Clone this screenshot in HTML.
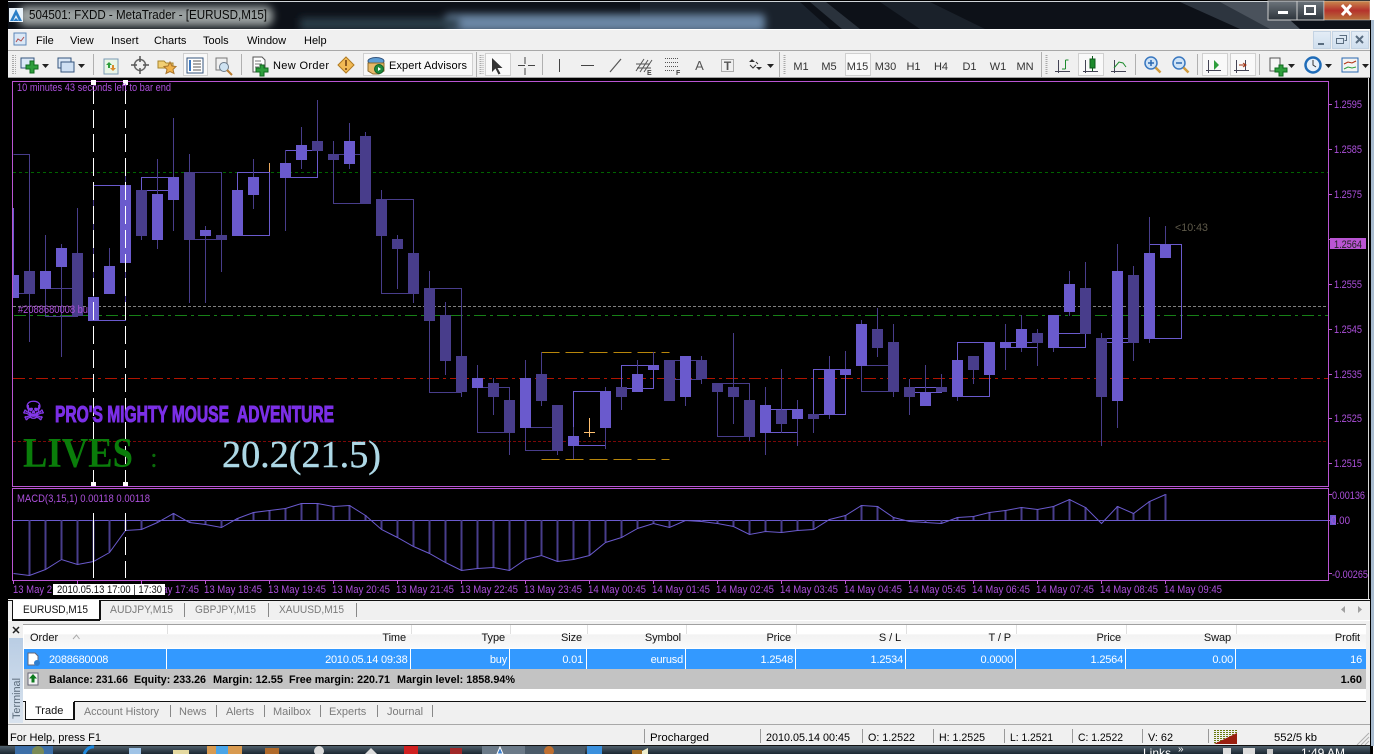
<!DOCTYPE html>
<html><head><meta charset="utf-8"><title>MetaTrader</title>
<style>
html,body{margin:0;padding:0;background:#fff;width:1378px;height:754px;overflow:hidden}
svg{display:block;position:absolute;left:0;top:0}
text{font-family:"Liberation Sans",sans-serif;font-size:11px;white-space:pre}
.c{fill:#ad50dc}
.t{fill:#ad50dc;font-size:11px}
.h{fill:#111;letter-spacing:-.1px;text-anchor:end}
.v{fill:#fff;letter-spacing:-.2px;text-anchor:end}
.g{fill:#7a7a7a}
.k{fill:#000}
.b{fill:#000;font-weight:bold}
.m{fill:#333;font-size:11px;text-anchor:middle}
</style></head><body>
<svg width="1378" height="754" viewBox="0 0 1378 754" xmlns="http://www.w3.org/2000/svg">
<defs>
<filter id="bl" x="-20%" y="-60%" width="140%" height="220%"><feGaussianBlur stdDeviation="4"/></filter>
<linearGradient id="cl" x1="0" y1="0" x2="0" y2="1"><stop offset="0" stop-color="#c98a4e"/><stop offset=".5" stop-color="#b5322c"/><stop offset="1" stop-color="#b8733c"/></linearGradient>
<linearGradient id="tb" x1="0" y1="0" x2="0" y2="1"><stop offset="0" stop-color="#50606c"/><stop offset="1" stop-color="#1b2731"/></linearGradient>
<linearGradient id="hd" x1="0" y1="0" x2="0" y2="1"><stop offset="0" stop-color="#fff"/><stop offset=".4" stop-color="#fff"/><stop offset=".41" stop-color="#f2f2f2"/><stop offset="1" stop-color="#fafafa"/></linearGradient>
<linearGradient id="tm" x1="0" y1="0" x2="0" y2="1"><stop offset="0" stop-color="#b9cde4"/><stop offset="1" stop-color="#d9e3ee"/></linearGradient>
<linearGradient id="mb" x1="0" y1="0" x2="0" y2="1"><stop offset="0" stop-color="#e4edf6"/><stop offset="1" stop-color="#cfdeee"/></linearGradient>
<linearGradient id="mn" x1="0" y1="0" x2="0" y2="1"><stop offset="0" stop-color="#6d757c"/><stop offset="1" stop-color="#2c333a"/></linearGradient>
</defs>

<!-- base -->
<rect x="0" y="0" width="1373" height="754" fill="#000"/>
<rect x="1371" y="20" width="3" height="726" fill="#a9bccf"/>
<rect x="1368" y="78" width="1" height="668" fill="#d8d8d8"/>

<!-- title wallpaper -->
<rect x="8" y="2" width="1362" height="27" fill="#0d1118"/>
<polygon points="640,2 800,2 830,29 640,29" fill="#1a222c"/>
<polygon points="810,2 826,2 860,29 842,29" fill="#2a323c"/>
<polygon points="880,2 930,2 985,29 920,29" fill="#1a212a"/>
<polygon points="1180,2 1270,2 1290,29 1240,29" fill="#2d353f"/>
<polygon points="1220,2 1270,2 1300,29 1270,29" fill="#4a525c"/>
<g filter="url(#bl)">
<rect x="18" y="6" width="255" height="20" rx="8" fill="#9aa0a0"/>
<rect x="445" y="14" width="320" height="18" rx="4" fill="#6a86a4"/>
<rect x="300" y="18" width="160" height="12" fill="#2c3c48"/>
</g>
<rect x="0" y="0" width="8" height="29" fill="#000"/>
<rect x="8" y="1" width="1362" height="1" fill="#cfd4d8"/>
<rect x="0" y="0" width="1373" height="1" fill="#000"/>
<rect x="9" y="8" width="14" height="14" fill="#e9f3fb"/>
<path d="M16 9L10 21H13L16 15L19 21H22Z M13 21L16 18L19 21" fill="#2b7fc8" />
<text x="29" y="19" style="font-size:13px;fill:#0a0a0a" textLength="238" lengthAdjust="spacingAndGlyphs">504501: FXDD - MetaTrader - [EURUSD,M15]</text>

<!-- title buttons -->
<g shape-rendering="crispEdges">
<rect x="1268" y="1" width="29" height="19" fill="url(#mn)" stroke="#ccc"/>
<rect x="1297" y="1" width="27" height="19" fill="url(#mn)" stroke="#ccc"/>
<rect x="1324" y="1" width="46" height="19" fill="url(#cl)" stroke="#ddd" stroke-opacity=".5"/>
<rect x="1278" y="11" width="10" height="3" fill="#fff"/>
<rect x="1305" y="6" width="10" height="8" fill="none" stroke="#fff" stroke-width="2"/>
</g>
<path d="M1342 5L1351 15M1351 5L1342 15" stroke="#fff" stroke-width="3"/>

<!-- menu + toolbar -->
<g shape-rendering="crispEdges">
<rect x="8" y="29" width="1362" height="49" fill="#f0f0f0"/>
<rect x="8" y="29" width="1362" height="1" fill="#fff"/>
<rect x="8" y="50" width="1362" height="1" fill="#a8a8a8"/>
<rect x="8" y="77" width="1362" height="1" fill="#a0a0a0"/>
</g>
<rect x="14" y="33" width="12" height="12" fill="#dbe8f6" stroke="#5b86b8"/>
<path d="M16 42l2-3 3 2 3-4" stroke="#b04a4a" fill="none"/>
<text x="36" y="44" class="k">File</text>
<text x="70" y="44" class="k">View</text>
<text x="111" y="44" class="k">Insert</text>
<text x="154" y="44" class="k">Charts</text>
<text x="203" y="44" class="k">Tools</text>
<text x="247" y="44" class="k">Window</text>
<text x="304" y="44" class="k">Help</text>

<!-- MDI buttons -->
<g shape-rendering="crispEdges">
<rect x="1313.5" y="31.5" width="17" height="17" fill="url(#mb)" stroke="#c4d3e3"/>
<rect x="1332.5" y="31.5" width="17" height="17" fill="url(#mb)" stroke="#c4d3e3"/>
<rect x="1351.5" y="31.5" width="17" height="17" fill="url(#mb)" stroke="#c4d3e3"/>
<rect x="1318" y="43" width="6" height="2" fill="#5a6d80"/>
<path d="M1339.5 35.5h7v5h-2M1336.5 38.5h7v5h-7z" fill="none" stroke="#5a6d80"/>
</g>
<path d="M1356 36l7 7M1363 36l-7 7" stroke="#5a6d80" stroke-width="2"/>

<!-- toolbar grips and separators -->
<g shape-rendering="crispEdges" fill="#b0b0b0">
<rect x="93" y="54" width="1" height="21"/><rect x="241" y="54" width="1" height="21"/>
<rect x="542" y="54" width="1" height="21"/><rect x="779" y="52" width="1" height="25"/>
<rect x="1041" y="52" width="1" height="25"/><rect x="1135" y="54" width="1" height="21"/>
<rect x="1197" y="54" width="1" height="21"/><rect x="1259" y="54" width="1" height="21"/>
<rect x="476" y="52" width="1" height="25"/>
</g>
<g stroke="#aaa" stroke-dasharray="1 1" shape-rendering="crispEdges">
<path d="M12.5 55V74M13.5 55V74M15.5 55V74"/>
<path d="M480 55V74M481 55V74M483 55V74"/>
<path d="M784 55V74M785 55V74"/>
<path d="M1046 55V74M1047 55V74"/>
</g>
<!-- active buttons -->
<g shape-rendering="crispEdges" fill="#f9f9f9" stroke="#d0d0d0">
<rect x="183.5" y="53.5" width="24" height="22"/>
<rect x="363.5" y="53.5" width="109" height="22"/>
<rect x="485.5" y="53.5" width="25" height="22"/>
<rect x="845.5" y="53.5" width="25" height="22"/>
<rect x="1078.5" y="53.5" width="25" height="22"/>
<rect x="1202.5" y="53.5" width="25" height="22"/>
<rect x="1230.5" y="53.5" width="25" height="22"/>
</g>

<!-- toolbar icons -->
<g fill="none">
<rect x="21" y="58" width="13" height="10" fill="#dbe8f6" stroke="#35557d"/>
<path d="M30 61h4v4h4v4h-4v4h-4v-4h-4v-4h4z" fill="#2e9e3c" stroke="#0f6a1e"/>
<path d="M42 64h7l-3.500 4z" fill="#222"/>
<rect x="58" y="58" width="13" height="10" fill="#dbe8f6" stroke="#35557d"/>
<rect x="61" y="62" width="13" height="10" fill="#cfe0f3" stroke="#35557d"/>
<path d="M78 64h7l-3.500 4z" fill="#222"/>
<rect x="104" y="59" width="14" height="15" fill="#e9f5e6" stroke="#7a9ab5"/>
<path d="M109 62l-3 3h2v3h2v-3h2z" fill="#2e9e3c"/>
<path d="M113 71l3-3h-2v-3h-2v3h-2z" fill="#d98a2a"/>
<circle cx="140" cy="65" r="5.500" stroke="#666" stroke-width="1.500"/>
<path d="M140 56v6M140 68v6M131 65h6M143 65h6" stroke="#555" stroke-width="1.500"/>
<path d="M158 61h6l2 2h7v5h-15z" fill="#f2cf74" stroke="#a8842c"/>
<path d="M170 62l2 4 4 .5-3 3 1 4-4-2-4 2 1-4-3-3 4-.500z" fill="#f0b24a" stroke="#a8742c"/>
<rect x="187" y="58" width="16" height="15" fill="#fff" stroke="#35557d"/>
<path d="M190 60v11" stroke="#3a78c0" stroke-width="2"/>
<path d="M193 61h8M193 64h8M193 67h8M193 70h8" stroke="#555"/>
<rect x="216" y="58" width="11" height="12" fill="#f0f0f0" stroke="#777"/>
<circle cx="224" cy="67" r="4.500" fill="#cfe3f2" stroke="#6a7a8a"/>
<path d="M227 70l5 5" stroke="#b87c30" stroke-width="2"/>
<path d="M253 57h9l3 3v12h-12z" fill="#fff" stroke="#555"/>
<path d="M255 61h6M255 64h7M255 67h4" stroke="#777"/>
<path d="M260 65h4v3h4v4h-4v4h-4v-4h-4v-4h4z" fill="#2e9e3c" stroke="#0f6a1e"/>
<path d="M346 57l8 8-8 8-8-8z" fill="#f2ba55" stroke="#b07a20"/>
<path d="M346 60v6M346 68v2" stroke="#6a3a10" stroke-width="1.500"/>
<ellipse cx="376" cy="61" rx="8" ry="3.500" fill="#5d9dd5" stroke="#35557d"/>
<path d="M368 63h16v8l-5 3h-6l-5-3z" fill="#e8b868" stroke="#8a6a2a"/>
<circle cx="379" cy="69" r="4.500" fill="#1e8a3c" stroke="#10602a"/>
<path d="M378 67l3 2-3 2z" fill="#fff"/>
<path d="M492 58v14l3.500-3.500 3 6 2-1-3-5.500h5z" fill="#333"/>
<path d="M525 57v7M525 68v7M518 65.500h7M528 65.500h7" stroke="#444" stroke-width="1" shape-rendering="crispEdges"/>
<path d="M559.500 59v13" stroke="#444"/>
<path d="M581 65.500h13" stroke="#444"/>
<path d="M610 72l11-13" stroke="#555" stroke-width="1.200"/>
<path d="M636 71l8-12M640 72l8-12M644 72l8-12M636 64h14M637 68h14" stroke="#555"/>
<text x="647" y="75" style="font-size:7px;font-weight:bold;fill:#444">E</text>
<path d="M665 58.500h13M665 62.500h13M665 66.500h13M665 70.500h10" stroke="#555" stroke-dasharray="1 1"/>
<text x="676" y="75" style="font-size:7px;font-weight:bold;fill:#444">F</text>
<text x="699.500" y="70" style="font-size:13px;fill:#555;text-anchor:middle">A</text>
<rect x="721.500" y="59.500" width="12" height="12" stroke="#666" stroke-dasharray="1 1"/>
<text x="727.500" y="70" style="font-size:12px;fill:#555;text-anchor:middle;font-weight:bold">T</text>
<path d="M752 59l3 3h-6zM759 70l3-3h-6z" fill="#333"/>
<path d="M750 65l3 3 3-3M756 62l2 2" stroke="#333"/>
<path d="M767 64h7l-3.500 4z" fill="#222"/>
</g>
<text x="273" y="69" class="k" textLength="56" lengthAdjust="spacing">New Order</text>
<text x="389" y="69" class="k" textLength="78" lengthAdjust="spacing">Expert Advisors</text>
<g class="mt">
<text x="801" y="70" class="m">M1</text>
<text x="829" y="70" class="m">M5</text>
<text x="857.500" y="70" class="m">M15</text>
<text x="885.500" y="70" class="m">M30</text>
<text x="913.500" y="70" class="m">H1</text>
<text x="941" y="70" class="m">H4</text>
<text x="969.500" y="70" class="m">D1</text>
<text x="998" y="70" class="m">W1</text>
<text x="1025" y="70" class="m">MN</text>
</g>
<g fill="none" shape-rendering="crispEdges">
<path d="M1058.500 60v13M1055 71.500h15" stroke="#445"/>
<path d="M1065.500 60v9M1065.500 60h3M1062 69h3.500" stroke="#1c8a2c"/>
<path d="M1085.500 60v13M1083 71.500h15" stroke="#445"/>
<path d="M1092.500 56v15" stroke="#0d5a1a"/>
<rect x="1090" y="59" width="5" height="9" fill="#1c8a2c" stroke="#0d5a1a"/>
<path d="M1114.500 60v13M1111 71.500h15" stroke="#445"/>
</g>
<path d="M1114 68l5-6 4 1 3 4" stroke="#1c8a2c" fill="none"/>
<g fill="none">
<circle cx="1151" cy="63" r="6" fill="#cfe3f6" stroke="#3a78c0" stroke-width="1.500"/>
<path d="M1148 63h6M1151 60v6" stroke="#2a68b0" stroke-width="1.500"/>
<path d="M1155.500 67.500l5 5" stroke="#d09a3c" stroke-width="2.500"/>
<circle cx="1179" cy="63" r="6" fill="#cfe3f6" stroke="#3a78c0" stroke-width="1.500"/>
<path d="M1176 63h6" stroke="#2a68b0" stroke-width="1.500"/>
<path d="M1183.500 67.500l5 5" stroke="#d09a3c" stroke-width="2.500"/>
<path d="M1208.500 60v13M1206 70.500h15" stroke="#445" shape-rendering="crispEdges"/>
<path d="M1214 60l5 5-5 5z" fill="#2e9e3c"/>
<path d="M1236.500 60v13M1234 70.500h15M1245.500 60v10" stroke="#445" shape-rendering="crispEdges"/>
<path d="M1239 65h6M1243 63l3 2-3 2" stroke="#a03010"/>
<rect x="1270" y="58" width="10" height="13" fill="#f6f6f6" stroke="#555"/>
<path d="M1279 65h4v3h4v4h-4v4h-4v-4h-4v-4h4z" fill="#2e9e3c" stroke="#0f6a1e"/>
<path d="M1288 64h7l-3.500 4z" fill="#222"/>
<circle cx="1313" cy="65" r="7.500" fill="#e8f0f8" stroke="#1f6cb8" stroke-width="2.500"/>
<path d="M1313 60v5l3 2" stroke="#333"/>
<path d="M1325 64h7l-3.500 4z" fill="#222"/>
<rect x="1342" y="58" width="16" height="14" fill="#f3f3f3" stroke="#2a68b0"/>
<path d="M1344 64l4-2 4 1 4-2" stroke="#b03010"/>
<path d="M1344 69l4-2 4 1 4-1" stroke="#2e9e3c"/>
<path d="M1362 64h7l-3.500 4z" fill="#222"/>
</g>

<!-- chart grid lines -->
<g fill="none" shape-rendering="crispEdges">
<path d="M13 172.500H1328" stroke="#006400" stroke-dasharray="3 3"/>
<path d="M13 306.500H1328" stroke="#808080" stroke-dasharray="3 2"/>
<path d="M14 315.500H1328" stroke="#178017" stroke-dasharray="12 4 3 4"/>
<path d="M13 378.500H1328" stroke="#b01400" stroke-dasharray="12 4 3 4"/>
<path d="M13 441.500H1328" stroke="#7a0808" stroke-dasharray="3 2"/>
</g>

<!-- boxes -->
<g transform="translate(.5 .5)" fill="none" shape-rendering="crispEdges">
<g stroke="#483d8b">
<path d="M13 154H29V293H13"/>
<rect x="45" y="288" width="32" height="28"/>
<rect x="189" y="172" width="32" height="67"/>
<rect x="333" y="154" width="32" height="49"/>
<rect x="381" y="199" width="32" height="94"/>
<rect x="429" y="288" width="32" height="104"/>
<rect x="477" y="387" width="32" height="45"/>
<rect x="525" y="427" width="32" height="23"/>
<rect x="669" y="360" width="32" height="19"/>
<rect x="717" y="383" width="32" height="53"/>
<rect x="861" y="365" width="32" height="26"/>
</g>
<g stroke="#6a5acd">
<rect x="93" y="185" width="32" height="135"/>
<rect x="141" y="177" width="32" height="13"/>
<rect x="237" y="172" width="32" height="63"/>
<rect x="285" y="150" width="32" height="27"/>
<rect x="573" y="391" width="32" height="54"/>
<rect x="621" y="365" width="32" height="23"/>
<rect x="765" y="409" width="32" height="23"/>
<rect x="813" y="369" width="32" height="45"/>
<rect x="909" y="387" width="32" height="5"/>
<rect x="957" y="342" width="32" height="54"/>
<rect x="1005" y="342" width="32" height="5"/>
<rect x="1053" y="333" width="32" height="14"/>
<rect x="1101" y="338" width="32" height="4"/>
<rect x="1149" y="244" width="32" height="94"/>
</g>
<path d="M541 352H669M541 459H669" stroke="#b8860b" stroke-dasharray="18 6"/>
</g>

<!-- wicks -->
<path d="M13.500 208V298" stroke="#6a5acd" shape-rendering="crispEdges"/>
<path transform="translate(.5 0)" shape-rendering="crispEdges" fill="none" stroke="#483d8b" d="M29 271V342M45 235V316M61 244V357M77 208V316M93 195V297M109 248V266M125 168V300M141 190V240M157 159V249M173 118V231M189 154V303M205 226V303M221 235V272M253 159V209M285 150V231M301 127V169M317 100V151M333 141V204M349 123V169M365 132V136M381 190V236M397 235V289M413 253V303M429 271V321M445 302V375M461 315V397M477 365V378M493 378V415M509 400V455M525 360V378M541 352V406M557 451V455M573 427V459M605 387V449M621 387V410M637 360V374M653 352V365M685 397V406M701 356V384M717 383V437M733 333V424M749 437V441M765 387V455M781 369V433M797 400V446M813 414V433M829 356V419M845 351V369M861 320V324M877 308V357M893 324V397M909 379V415M925 365V392M941 374V387M957 360V401M973 356V384M1005 324V370M1021 315V352M1037 329V366M1053 315V352M1069 271V316M1085 262V288M1101 333V446M1117 244V428M1133 266V361M1149 217V343M1165 226V244"/>

<!-- dark bodies -->
<path transform="translate(.5 0)" shape-rendering="crispEdges" fill="none" stroke="#483d8b" stroke-width="11" d="M29 271V294M77 253V316M141 190V236M189 172V240M221 235V240M317 141V151M333 154V160M365 136V204M381 199V236M397 239V249M413 253V294M429 288V321M445 315V361M461 356V392M493 383V397M509 400V433M541 374V401M557 405V451M621 387V397M669 360V401M701 360V379M717 383V392M733 387V397M749 400V437M781 410V424M813 414V419M877 329V348M893 342V392M909 387V397M941 387V392M973 356V370M1037 333V343M1085 288V334M1101 338V397M1133 275V343"/>
<!-- light bodies -->
<rect x="14" y="275" width="5" height="23" fill="#6a5acd"/>
<path transform="translate(.5 0)" shape-rendering="crispEdges" fill="none" stroke="#6a5acd" stroke-width="11" d="M45 271V289M61 248V267M93 297V321M109 266V294M125 185V263M157 194V240M173 177V200M205 230V236M237 190V236M253 177V195M285 163V178M301 145V160M349 141V164M477 378V388M525 378V428M573 436V446M605 391V428M637 374V392M653 365V370M685 356V397M765 405V433M797 409V419M829 369V415M845 369V375M861 324V366M925 392V406M957 360V397M989 342V375M1005 342V348M1021 329V348M1053 315V348M1069 284V312M1117 271V401M1149 253V339M1165 244V258"/>

<!-- orange marks -->
<path d="M589.500 418V437M584 432.500H595" stroke="#ffc070" fill="none" shape-rendering="crispEdges"/>
<path d="M269.500 163V172" stroke="#e8a860" shape-rendering="crispEdges"/>

<!-- macd -->
<rect x="13" y="520" width="1315" height="1" fill="#6a5acd"/>
<path transform="translate(.5 0)" shape-rendering="crispEdges" fill="none" stroke="#483d8b" stroke-width="2" d="M29 520V575M45 520V569M61 520V559M77 520V564M93 520V561M109 520V552M125 520V530M141 520V529M157 520V522M173 520V513M189 520V522M205 520V524M221 520V527M237 520V518M253 520V512M269 520V510M285 520V508M301 520V503M317 520V503M333 520V506M349 520V505M365 520V515M381 520V529M397 520V537M413 520V546M429 520V553M445 520V562M461 520V570M477 520V568M493 520V567M509 520V570M525 520V559M541 520V555M557 520V561M573 520V559M589 520V555M605 520V542M621 520V537M637 520V528M653 520V523M669 520V527M701 520V521M717 520V523M733 520V526M749 520V534M765 520V531M781 520V532M797 520V530M813 520V529M829 520V519M845 520V515M861 520V505M877 520V506M893 520V517M925 520V522M941 520V523M957 520V517M973 520V516M989 520V512M1005 520V510M1021 520V507M1037 520V509M1053 520V506M1069 520V499M1085 520V507M1117 520V506M1133 520V513M1149 520V501M1165 520V494"/>
<polyline transform="translate(.5 .5)" fill="none" stroke="#6a5acd" points="13,573 29,575 45,569 61,559 77,564 93,561 109,552 125,530 141,529 157,522 173,513 189,522 205,524 221,527 237,518 253,512 269,510 285,508 301,503 317,503 333,506 349,505 365,515 381,529 397,537 413,546 429,553 445,562 461,570 477,568 493,567 509,570 525,559 541,555 557,561 573,559 589,555 605,542 621,537 637,528 653,523 669,527 685,520 701,521 717,523 733,526 749,534 765,531 781,532 797,530 813,529 829,519 845,515 861,505 877,506 893,517 909,521 925,522 941,523 957,517 973,516 989,512 1005,510 1021,507 1037,509 1053,506 1069,499 1085,507 1101,523 1117,506 1133,513 1149,501 1165,494"/>

<!-- white vlines -->
<g fill="none" stroke="#fff" shape-rendering="crispEdges">
<path d="M93.500 86V484" stroke-dasharray="18 6"/>
<path d="M125.500 86V484" stroke-dasharray="18 6"/>
<path d="M93.500 513V578"/>
<path d="M125.500 513V578" stroke-dasharray="18 6"/>
</g>

<!-- panes border -->
<g fill="none" stroke="#ba55d3" shape-rendering="crispEdges">
<rect x="12.500" y="81.500" width="1316" height="405"/>
<rect x="12.500" y="488.500" width="1316" height="92"/>
<path d="M1328 104.500h4M1328 149.500h4M1328 194.500h4M1328 239.500h4M1328 284.500h4M1328 329.500h4M1328 374.500h4M1328 418.500h4M1328 463.500h4M1328 494.500h4M1328 520.500h4M1328 573.500h4"/>
<path d="M13.500 581v3M77.500 581v3M141.500 581v3M205.500 581v3M269.500 581v3M333.500 581v3M397.500 581v3M461.500 581v3M525.500 581v3M589.500 581v3M653.500 581v3M717.500 581v3M781.500 581v3M845.500 581v3M909.500 581v3M973.500 581v3M1037.500 581v3M1101.500 581v3M1165.500 581v3"/>
</g>
<g fill="#fff" shape-rendering="crispEdges">
<rect x="91" y="80" width="5" height="5"/><rect x="123" y="80" width="5" height="5"/>
<rect x="91" y="482" width="5" height="4"/><rect x="123" y="482" width="5" height="4"/>
</g>

<!-- chart texts -->
<text x="17" y="91" class="c" textLength="154" lengthAdjust="spacingAndGlyphs">10 minutes 43 seconds left to bar end</text>
<text x="18" y="313" class="c" textLength="70" lengthAdjust="spacingAndGlyphs">#2088680008 bu</text>
<text x="1175" y="231" style="fill:#5f5a4a" textLength="33" lengthAdjust="spacingAndGlyphs">&lt;10:43</text>
<text x="17" y="502" class="c" textLength="133" lengthAdjust="spacingAndGlyphs">MACD(3,15,1) 0.00118 0.00118</text>
<g class="ax">
<text x="1334" y="108" class="c" textLength="28" lengthAdjust="spacingAndGlyphs">1.2595</text>
<text x="1334" y="153" class="c" textLength="28" lengthAdjust="spacingAndGlyphs">1.2585</text>
<text x="1334" y="198" class="c" textLength="28" lengthAdjust="spacingAndGlyphs">1.2575</text>
<text x="1334" y="288" class="c" textLength="28" lengthAdjust="spacingAndGlyphs">1.2555</text>
<text x="1334" y="333" class="c" textLength="28" lengthAdjust="spacingAndGlyphs">1.2545</text>
<text x="1334" y="378" class="c" textLength="28" lengthAdjust="spacingAndGlyphs">1.2535</text>
<text x="1334" y="422" class="c" textLength="28" lengthAdjust="spacingAndGlyphs">1.2525</text>
<text x="1334" y="467" class="c" textLength="28" lengthAdjust="spacingAndGlyphs">1.2515</text>
</g>
<rect x="1330" y="238" width="36" height="11" fill="#ba55d3" shape-rendering="crispEdges"/>
<text x="1334" y="248" style="fill:#222" textLength="28" lengthAdjust="spacingAndGlyphs">1.2564</text>
<text x="1332" y="499" class="c" textLength="33" lengthAdjust="spacingAndGlyphs">0.00136</text>
<rect x="1330" y="515" width="6" height="10" fill="#6a5acd" shape-rendering="crispEdges"/>
<text x="1331" y="524" class="c" textLength="19" lengthAdjust="spacingAndGlyphs">0.00</text>
<text x="1332" y="578" class="c" textLength="36" lengthAdjust="spacingAndGlyphs">-0.00265</text>

<text x="13" y="593" class="t" textLength="39" lengthAdjust="spacingAndGlyphs">13 May 2</text>
<text x="141" y="593" class="t" textLength="58" lengthAdjust="spacingAndGlyphs">13 May 17:45</text>
<text x="204" y="593" class="t" textLength="58" lengthAdjust="spacingAndGlyphs">13 May 18:45</text>
<text x="268" y="593" class="t" textLength="58" lengthAdjust="spacingAndGlyphs">13 May 19:45</text>
<text x="332" y="593" class="t" textLength="58" lengthAdjust="spacingAndGlyphs">13 May 20:45</text>
<text x="396" y="593" class="t" textLength="58" lengthAdjust="spacingAndGlyphs">13 May 21:45</text>
<text x="460" y="593" class="t" textLength="58" lengthAdjust="spacingAndGlyphs">13 May 22:45</text>
<text x="524" y="593" class="t" textLength="58" lengthAdjust="spacingAndGlyphs">13 May 23:45</text>
<text x="588" y="593" class="t" textLength="58" lengthAdjust="spacingAndGlyphs">14 May 00:45</text>
<text x="652" y="593" class="t" textLength="58" lengthAdjust="spacingAndGlyphs">14 May 01:45</text>
<text x="716" y="593" class="t" textLength="58" lengthAdjust="spacingAndGlyphs">14 May 02:45</text>
<text x="780" y="593" class="t" textLength="58" lengthAdjust="spacingAndGlyphs">14 May 03:45</text>
<text x="844" y="593" class="t" textLength="58" lengthAdjust="spacingAndGlyphs">14 May 04:45</text>
<text x="908" y="593" class="t" textLength="58" lengthAdjust="spacingAndGlyphs">14 May 05:45</text>
<text x="972" y="593" class="t" textLength="58" lengthAdjust="spacingAndGlyphs">14 May 06:45</text>
<text x="1036" y="593" class="t" textLength="58" lengthAdjust="spacingAndGlyphs">14 May 07:45</text>
<text x="1100" y="593" class="t" textLength="58" lengthAdjust="spacingAndGlyphs">14 May 08:45</text>
<text x="1164" y="593" class="t" textLength="58" lengthAdjust="spacingAndGlyphs">14 May 09:45</text>
<rect x="53" y="584" width="112" height="11" fill="#fff" shape-rendering="crispEdges"/>
<text x="57" y="593" style="fill:#111" textLength="105" lengthAdjust="spacingAndGlyphs">2010.05.13 17:00 | 17:30</text>

<!-- overlay banner -->
<text x="33.500" y="420" style="font-family:'DejaVu Sans',sans-serif;font-size:26px;fill:#8338e8;stroke:#8338e8;stroke-width:.7;text-anchor:middle">☠</text>
<text x="55" y="422" style="font-family:'Liberation Sans',sans-serif;font-size:23px;font-weight:bold;fill:#7b2fe6;stroke:#7b2fe6;stroke-width:1" textLength="279" lengthAdjust="spacingAndGlyphs">PRO'S MIGHTY MOUSE  ADVENTURE</text>
<text x="23" y="467" style="font-family:'Liberation Serif',serif;font-size:42px;font-weight:bold;fill:#0a7d0a" textLength="110" lengthAdjust="spacingAndGlyphs">LIVES</text>
<text x="150" y="467" style="font-family:'Liberation Serif',serif;font-size:28px;fill:#0a6a0a">:</text>
<text x="222" y="467" style="font-family:'Liberation Serif',serif;font-size:38px;fill:#add8e6;stroke:#add8e6;stroke-width:.4" textLength="159" lengthAdjust="spacingAndGlyphs">20.2(21.5)</text>

<!-- tabs -->
<g shape-rendering="crispEdges">
<rect x="8" y="599" width="1362" height="147" fill="#f0f0f0"/>
<rect x="8" y="600" width="1362" height="1" fill="#111"/>
<rect x="8" y="620" width="1362" height="1" fill="#fff"/>
<rect x="13" y="600" width="87" height="19" fill="#fff"/>
<rect x="12" y="600" width="1" height="20" fill="#111"/>
<rect x="99" y="600" width="2" height="20" fill="#111"/>
<rect x="12" y="619" width="88" height="2" fill="#111"/>
<rect x="184" y="603" width="1" height="14" fill="#888"/>
<rect x="268" y="603" width="1" height="14" fill="#888"/>
<rect x="356" y="603" width="1" height="14" fill="#888"/>
</g>
<text x="23" y="613" style="fill:#111" textLength="65" lengthAdjust="spacingAndGlyphs">EURUSD,M15</text>
<text x="110" y="613" class="g" textLength="63" lengthAdjust="spacingAndGlyphs">AUDJPY,M15</text>
<text x="195" y="613" class="g" textLength="61" lengthAdjust="spacingAndGlyphs">GBPJPY,M15</text>
<text x="279" y="613" class="g" textLength="65" lengthAdjust="spacingAndGlyphs">XAUUSD,M15</text>
<path d="M1345 606v7l-4-3.500zM1358 606v7l4-3.500z" fill="#a0a0a0"/>

<!-- terminal -->
<g shape-rendering="crispEdges">
<rect x="8" y="622" width="1362" height="102" fill="#f0f0f0"/>
<rect x="23" y="624" width="1343" height="1" fill="#a0a0a0"/>
<rect x="23" y="625" width="1343" height="76" fill="#fff"/>
<rect x="24" y="625" width="1342" height="23" fill="url(#hd)"/>
<rect x="9" y="638" width="14" height="85" fill="url(#tm)"/>
<rect x="24" y="649" width="1342" height="20" fill="#3399ff"/>
<rect x="24" y="669" width="1342" height="20" fill="#c3c3c3"/>
<g fill="#fff">
<rect x="166" y="649" width="1" height="20"/><rect x="410" y="649" width="1" height="20"/><rect x="509" y="649" width="1" height="20"/><rect x="586" y="649" width="1" height="20"/><rect x="685" y="649" width="1" height="20"/><rect x="795" y="649" width="1" height="20"/><rect x="905" y="649" width="1" height="20"/><rect x="1015" y="649" width="1" height="20"/><rect x="1125" y="649" width="1" height="20"/><rect x="1235" y="649" width="1" height="20"/>
</g>
<g fill="#e0e0e0">
<rect x="167" y="625" width="1" height="9"/><rect x="411" y="625" width="1" height="9"/><rect x="510" y="625" width="1" height="9"/><rect x="587" y="625" width="1" height="9"/><rect x="686" y="625" width="1" height="9"/><rect x="796" y="625" width="1" height="9"/><rect x="906" y="625" width="1" height="9"/><rect x="1016" y="625" width="1" height="9"/><rect x="1126" y="625" width="1" height="9"/><rect x="1236" y="625" width="1" height="9"/>
</g>
<rect x="23" y="701" width="1343" height="1" fill="#111"/>
<rect x="23" y="702" width="1343" height="20" fill="#f0f0f0"/>
<rect x="26" y="701" width="48" height="18" fill="#fff"/>
<rect x="25" y="702" width="1" height="17" fill="#111"/>
<rect x="73" y="702" width="2" height="17" fill="#111"/>
<rect x="25" y="719" width="50" height="1" fill="#111"/>
<rect x="170" y="705" width="1" height="12" fill="#888"/><rect x="216" y="705" width="1" height="12" fill="#888"/><rect x="264" y="705" width="1" height="12" fill="#888"/><rect x="320" y="705" width="1" height="12" fill="#888"/><rect x="377" y="705" width="1" height="12" fill="#888"/><rect x="432" y="705" width="1" height="12" fill="#888"/>
<rect x="8" y="724" width="1362" height="1" fill="#a8a8a8"/>
</g>
<path d="M13 627l6 6M19 627l-6 6" stroke="#222" stroke-width="1.500"/>
<text transform="translate(20 719) rotate(-90)" style="fill:#5a6a7a;font-size:11px" textLength="41" lengthAdjust="spacingAndGlyphs">Terminal</text>

<text x="30" y="641" style="fill:#111">Order</text>
<path d="M73 639l3.500-4 3 4" stroke="#aaa" fill="none"/>
<text x="406" y="641" class="h">Time</text>
<text x="505" y="641" class="h">Type</text>
<text x="582" y="641" class="h">Size</text>
<text x="681" y="641" class="h">Symbol</text>
<text x="791" y="641" class="h">Price</text>
<text x="901" y="641" class="h">S / L</text>
<text x="1011" y="641" class="h">T / P</text>
<text x="1121" y="641" class="h">Price</text>
<text x="1231" y="641" class="h">Swap</text>
<text x="1360" y="641" class="h">Profit</text>

<path d="M28 653h7l3 3v9h-10z" fill="#fff" stroke="#667"/>
<circle cx="37" cy="663" r="3" fill="#2f7fd0"/>
<text x="49" y="663" style="fill:#fff;letter-spacing:-.2px">2088680008</text>
<text x="407.500" y="663" class="v">2010.05.14 09:38</text>
<text x="507" y="663" class="v">buy</text>
<text x="583" y="663" class="v">0.01</text>
<text x="683" y="663" class="v">eurusd</text>
<text x="793" y="663" class="v">1.2548</text>
<text x="903" y="663" class="v">1.2534</text>
<text x="1013" y="663" class="v">0.0000</text>
<text x="1123" y="663" class="v">1.2564</text>
<text x="1233" y="663" class="v">0.00</text>
<text x="1362" y="663" class="v">16</text>

<rect x="28" y="673" width="10" height="12" fill="#f4f4f4" stroke="#667"/>
<path d="M33 674l4 4.500h-2.500v4h-3v-4h-2.500z" fill="#0d7a1e"/>
<text x="49" y="683" class="b" textLength="79" lengthAdjust="spacingAndGlyphs">Balance: 231.66</text>
<text x="134" y="683" class="b" textLength="72" lengthAdjust="spacingAndGlyphs">Equity: 233.26</text>
<text x="213" y="683" class="b" textLength="70" lengthAdjust="spacingAndGlyphs">Margin: 12.55</text>
<text x="289" y="683" class="b" textLength="101" lengthAdjust="spacingAndGlyphs">Free margin: 220.71</text>
<text x="397" y="683" class="b" textLength="118" lengthAdjust="spacingAndGlyphs">Margin level: 1858.94%</text>
<text x="1362" y="683" class="b" style="text-anchor:end">1.60</text>

<text x="35" y="714" style="fill:#111">Trade</text>
<text x="84" y="715" class="g" textLength="75" lengthAdjust="spacingAndGlyphs">Account History</text>
<text x="179" y="715" class="g">News</text>
<text x="226" y="715" class="g">Alerts</text>
<text x="273" y="715" class="g">Mailbox</text>
<text x="329" y="715" class="g">Experts</text>
<text x="387" y="715" class="g">Journal</text>

<!-- status -->
<g fill="#999" shape-rendering="crispEdges">
<rect x="644" y="729" width="1" height="14"/><rect x="760" y="729" width="1" height="14"/><rect x="862" y="729" width="1" height="14"/><rect x="933" y="729" width="1" height="14"/><rect x="1004" y="729" width="1" height="14"/><rect x="1072" y="729" width="1" height="14"/><rect x="1142" y="729" width="1" height="14"/><rect x="1208" y="729" width="1" height="14"/>
</g>
<text x="10" y="741" class="k" textLength="91" lengthAdjust="spacingAndGlyphs">For Help, press F1</text>
<text x="650" y="741" class="k" textLength="59" lengthAdjust="spacingAndGlyphs">Procharged</text>
<text x="766" y="741" class="k" textLength="84" lengthAdjust="spacingAndGlyphs">2010.05.14 00:45</text>
<text x="868" y="741" class="k" textLength="47" lengthAdjust="spacingAndGlyphs">O: 1.2522</text>
<text x="939" y="741" class="k" textLength="46" lengthAdjust="spacingAndGlyphs">H: 1.2525</text>
<text x="1010" y="741" class="k" textLength="43" lengthAdjust="spacingAndGlyphs">L: 1.2521</text>
<text x="1078" y="741" class="k" textLength="45" lengthAdjust="spacingAndGlyphs">C: 1.2522</text>
<text x="1148" y="741" class="k" textLength="25" lengthAdjust="spacingAndGlyphs">V: 62</text>
<g shape-rendering="crispEdges" fill="none" stroke-width="2" stroke-dasharray="1 1">
<path d="M1215 730V743M1218 730V743M1221 730V743M1224 730V743M1227 730V743M1230 730V743M1233 730V743M1236 730V743" stroke="#6a7a10"/>
</g>
<polygon points="1214,744 1237,744 1237,733" fill="#9a2010"/>
<text x="1274" y="741" class="k" textLength="43" lengthAdjust="spacingAndGlyphs">552/5 kb</text>
<path d="M1357 745l12-12M1361 745l8-8M1365 745l4-4" stroke="#b0b0b0" fill="none"/>

<!-- taskbar -->
<rect x="0" y="746" width="1370" height="8" fill="url(#tb)" shape-rendering="crispEdges"/>
<rect x="0" y="745" width="1370" height="1" fill="#111" shape-rendering="crispEdges"/>
<rect x="15" y="746" width="38" height="8" fill="#3d6fa8"/>
<circle cx="38" cy="752" r="6" fill="#7a8a55"/>
<path d="M84 754q4-8 10-7" stroke="#1f8adf" stroke-width="3" fill="none"/>
<rect x="129" y="748" width="12" height="6" fill="#9fc3e6"/>
<rect x="173" y="750" width="16" height="4" fill="#e4d9a0"/>
<rect x="207" y="746" width="35" height="8" fill="#d89a50"/>
<rect x="216" y="746" width="12" height="8" fill="#4aa5e8"/>
<rect x="265" y="748" width="14" height="6" fill="#b06a2a"/>
<circle cx="319" cy="751" r="5" fill="#ddd"/>
<path d="M365 754l6-6 6 6z" fill="#ddd"/>
<rect x="404" y="746" width="14" height="8" fill="#d02020"/>
<rect x="450" y="748" width="12" height="6" fill="#a02828"/>
<rect x="482" y="746" width="50" height="8" fill="#6b7a88"/>
<path d="M497 754l3-7 3 7z" fill="#3a7fcf" stroke="#fff"/>
<rect x="525" y="746" width="60" height="8" fill="#4a5a68"/>
<circle cx="549" cy="751" r="5" fill="#c07030"/>
<rect x="587" y="746" width="15" height="8" fill="#3a90dd"/>
<path d="M636 754l12-6v6z" fill="#eec"/>
<rect x="632" y="750" width="10" height="4" fill="#a06a20"/>
<text x="1143" y="757" style="fill:#fff;font-size:12px">Links</text>
<text x="1178" y="752" style="fill:#fff;font-size:10px">»</text>
<rect x="1223" y="748" width="8" height="6" fill="#ddd"/>
<rect x="1243" y="748" width="12" height="6" fill="#ddd"/>
<rect x="1267" y="749" width="6" height="5" fill="#ccc"/>
<text x="1301" y="757" style="fill:#fff;font-size:12px">1:49 AM</text>

<!-- right white edge -->
<rect x="1374" y="0" width="4" height="754" fill="#fff"/>
<rect x="1370" y="0" width="4" height="20" fill="#fff"/>
</svg>
</body></html>
